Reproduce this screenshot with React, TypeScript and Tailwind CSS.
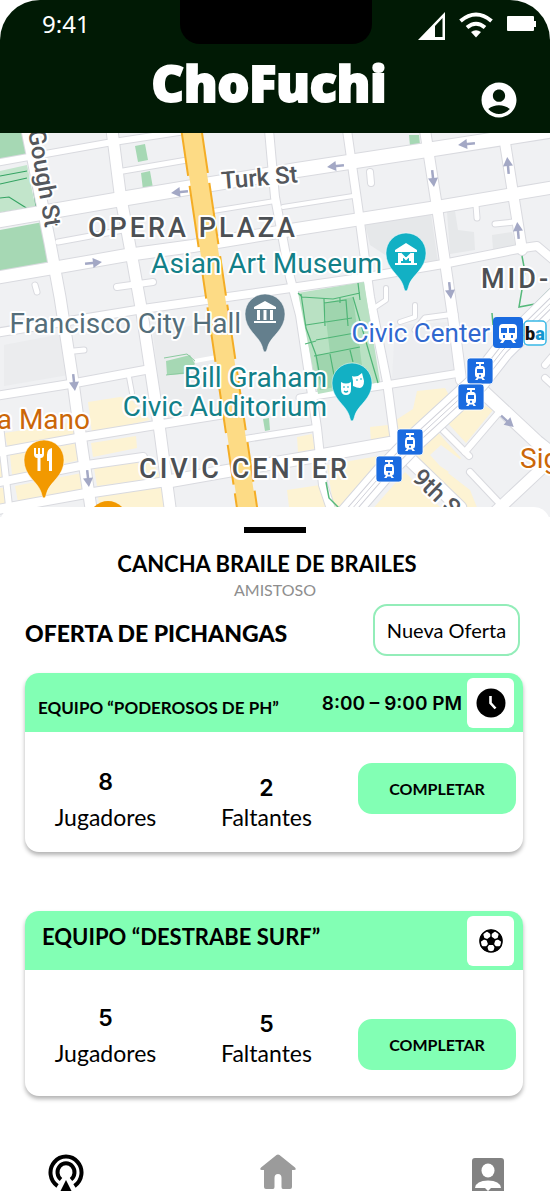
import type { ReactNode } from "react";
import { MdAccountCircle } from "react-icons/md";

/* ---------- Map ---------- */

const roads: { d: string; w: number }[] = [
  { d: "M-5 163 L107 143 L192 130", w: 6 },
  { d: "M-5 221 L127 198 L187 188 L297 170 L427 150 L555 130", w: 14 },
  { d: "M-5 278 L53 268 L127 255 L193 246 L297 229 L437 207 L555 187", w: 12 },
  { d: "M-5 333 L143 309 L270 291 L367 277 L443 264 L523 248 L537 246 L556 262", w: 8 },
  { d: "M-5 396 L70 384 L145 370", w: 8 },
  { d: "M300 398 L380 386 L460 373", w: 7 },
  { d: "M-5 453 L77 438 L150 426 L225 414", w: 8 },
  { d: "M245 439 L315 428", w: 6 },
  { d: "M-5 483 L80 466 L143 457", w: 8 },
  { d: "M165 482 L233 470 L317 456 L390 443 L405 450", w: 12 },
  { d: "M-5 510 L83 494 L163 482", w: 9 },
  { d: "M58 242 L123 230", w: 5 },
  { d: "M123 171 L187 160", w: 5 },
  { d: "M213 211 L275 201", w: 4 },
  { d: "M283 207 L353 196", w: 4 },
  { d: "M117 287 L153 282", w: 6 },
  { d: "M27 130 L50 243 L60 297 L73 382 L82 448 L92 515", w: 11 },
  { d: "M112 130 L120 193 L133 263 L142 313 L160 432 L171 515", w: 11 },
  { d: "M0 425 L10 515", w: 6 },
  { d: "M269 130 L275 197 L290 277 L300 315 L317 428 L323 485 L333 515", w: 8 },
  { d: "M347 130 L358 207 L370 297 L387 382 L395 442", w: 8 },
  { d: "M425 130 L437 207 L453 317 L461 380", w: 10 },
  { d: "M503 130 L512 187 L522 250", w: 10 },
  { d: "M395 445 L460 508", w: 13 },
  { d: "M478 387 L537 442 L560 460", w: 13 },
  { d: "M437 424 L469 456", w: 6 },
  { d: "M465 452 L500 411", w: 6 },
  { d: "M470 472 L503 507", w: 6 },
  { d: "M492 515 L555 456", w: 11 },
  { d: "M545 365 L556 352", w: 6 },
  { d: "M545 378 L556 388", w: 6 },
  { d: "M370 172 L371 183", w: 6 },
  { d: "M476 205 L477 218", w: 5 },
  { d: "M495 224 L514 222", w: 5 },
  { d: "M386 288 L386 300 L374 308", w: 4 },
  { d: "M415 305 L415 317 L400 322", w: 4 },
  { d: "M35 285 L37 292", w: 5 },
  { d: "M129 377 L132 393", w: 4 },
  { d: "M74 351 L84 350", w: 5 },
  { d: "M415 330 L425 318 L455 314", w: 5 },
];

const arrows: [number, number, number][] = [
  [180, 192, 174],
  [336, 166, 174],
  [467, 144, 174],
  [93, 263, -6],
  [433, 178, 84],
  [450, 290, 84],
  [74, 382, 84],
  [88, 478, 84],
  [508, 166, 265],
  [518, 231, 265],
  [507, 421, 42],
];

const market = "M345 517 L383 473 L417 438 L478 382 L503 350 L560 294";

function Pin({ x, y, fill, children }: { x: number; y: number; fill: string; children: ReactNode }) {
  return (
    <g transform={`translate(${x} ${y})`}>
      <path
        d="M0 39 C-1.500 39 -2 36 -3 33 C-6 23 -20 17 -20 1 A20 20 0 0 1 20 1 C20 17 6 23 3 33 C2 36 1.500 39 0 39 Z"
        fill={fill}
        stroke="#ffffff"
        strokeOpacity="0.5"
      />
      {children}
    </g>
  );
}

function Tram({ x, y }: { x: number; y: number }) {
  return (
    <g transform={`translate(${x} ${y})`}>
      <rect x="-13" y="-13" width="26" height="26" rx="3" fill="#1a6be0" stroke="#ffffff" strokeWidth="0.800" />
      <path d="M-4 -8 H4 M0 -8 V-4" stroke="#fff" strokeWidth="1.800" />
      <path
        fillRule="evenodd"
        d="M-3 -5 H3 Q5 -4 5 -1 V4 Q5 6 3 6.500 L5 9 H2.500 L1.500 7.500 H-1.500 L-2.500 9 H-5 L-3 6.500 Q-5 6 -5 4 V-1 Q-5 -4 -3 -5 Z M-3 -2 V2 H3 V-2 Z M0 3.500 A1.100 1.100 0 1 0 0.010 3.500 Z"
        fill="#fff"
      />
    </g>
  );
}

function CityMap() {
  return (
    <svg
      viewBox="0 133 550 384"
      preserveAspectRatio="xMidYMid slice"
      className="block h-[384px] w-full font-['Roboto',sans-serif]"
      role="img"
      aria-label="Mapa de Civic Center"
    >
      <rect x="-400" y="100" width="1400" height="450" fill="#f0f1f3" />

      <g fill="#e6e8ea">
        <path d="M365 224 L431 213 L438 262 L405 268 L370 245 Z" />
        <path d="M447 212 L455 211 L458 230 L474 232 L475 250 L450 254 Z" />
        <path d="M492 235 L512 232 L516 247 L493 250 Z" />
        <path d="M4 345 L62 334 L68 375 L4 386 Z M153 332 L215 322 L235 410 L163 424 Z" opacity="0.500" />
        <path d="M395 325 L450 322 L455 370 L392 380 Z" opacity="0.400" />
      </g>

      <g fill="#fdf3d3">
        <path d="M88 402 L120 397 L132 400 L150 420 L92 433 Z" />
        <path d="M91 443 L136 436 L137 448 L93 457 Z" />
        <path d="M4 433 L75 422 L78 435 L8 448 Z" />
        <path d="M10 455 L78 443 L80 460 L12 475 Z M0 460 H4 V478 H0 Z" />
        <path d="M15 486 L82 473 L86 489 L18 502 Z M0 488 H6 V506 H0 Z" />
        <path d="M94 468 L150 458 L161 478 L97 486 Z" />
        <path d="M98 496 L162 487 L165 515 H100 Z" />
        <path d="M297 437 L312 434 L315 449 L298 452 Z M370 427 L388 425 L390 438 L371 441 Z" />
        <path d="M417 391 L445 388 L450 397 L402 442 L396 420 L413 409 Z" />
        <path d="M327 465 L390 454 L398 462 L350 510 L335 515 Z M287 490 L320 485 L328 515 H290 Z" />
        <path d="M445 420 L468 397 L493 410 L466 443 Z M408 448 L434 428 L461 458 L448 473 L470 490 L480 515 H462 Z" />
        <path d="M370 512 L405 472 L448 515 Z" />
      </g>
      <path d="M430 455 L441 445 L461 460 L449 472 L440 466 Z" fill="#f0f1f3" />

      <g fill="#a6d8b4">
        <path d="M0 133 H25 L27 154 L0 159 Z" />
        <path d="M0 230 L43 222 L49 262 L0 271 Z" />
        <path d="M135 146 L145 144 L148 160 L138 162 Z M141 173 L150 171 L153 188 L143 190 Z" />
        <path d="M409 135 L419 135 L420 145 L410 146 Z" />
        <path d="M166 361 L190 355 L195 364 L184 374 L167 375 Z M263 419 L269 418 L270 430 L265 431 Z" />
      </g>
      <path d="M0 171 L27 165 L36 210 L0 217 Z" fill="#c2e5cb" />
      <path d="M0 176 L27 171 M0 184 L27 178 M0 198 L9 197 L28 209 M0 213 L36 207 L31 172" fill="none" stroke="#34a363" strokeWidth="1.200" />
      <path d="M164 358 L187 354 L195 361 M166 375 L184 373" fill="none" stroke="#8ccba0" strokeWidth="1" />

      <g fill="none" strokeLinecap="round" strokeLinejoin="round">
        {roads.map((r) => (
          <path key={r.d} d={r.d} stroke="#d9dadf" strokeWidth={r.w + 2} />
        ))}
        {roads.map((r) => (
          <path key={r.d} d={r.d} stroke="#ffffff" strokeWidth={r.w} />
        ))}
      </g>
      <path d="M195 361 L217 357" stroke="#fff" strokeWidth="4" />

      <path d="M298 293 L364 282 L380 382 L318 394 Z" fill="#b9e1c3" />
      <path d="M324 303 L353 297 L364 381 L320 390 L315 355 L330 353 Z" fill="#9fd5ae" />
      <path
        d="M298 293 L302 297 L333 299 L360 293 M301 294 L306 328 L316 355 L322 388 M324 299 L325 326 M324 303 L346 300 L348 326 M353 297 L378 383 M358 283 L360 300 M306 325 L352 318 M316 340 L355 333 M314 356 L360 347 M330 354 L334 375 M350 350 L353 362 M305 344 L316 341 M340 297 V303"
        fill="none"
        stroke="#4fb576"
        strokeWidth="1.200"
      />
      <path d="M522 256 L525 272 L519 307 L535 304 L550 289 M492 313 L493 325 M326 482 L329 498 L340 509" fill="none" stroke="#56b97b" strokeWidth="1.500" />

      <g fill="none">
        <path d={market} stroke="#d5d7de" strokeWidth="23" />
        <path d={market} stroke="#ffffff" strokeWidth="21" />
        <path d={market} stroke="#d0d1d9" strokeWidth="9" />
        <path d={market} stroke="#ffffff" strokeWidth="7" />
        <path d={market} stroke="#d0d1d9" strokeWidth="1" />
      </g>

      <path d="M190 120 L249 521" stroke="#f4ad25" strokeWidth="22" strokeDasharray="55 10 62 12 40 9" />
      <path d="M190 120 L249 521" stroke="#fddb85" strokeWidth="18" />

      {arrows.map(([x, y, angle]) => (
        <g key={`${x}-${y}`} transform={`translate(${x} ${y}) rotate(${angle})`}>
          <path d="M-8 0 H2" stroke="#a3a8c5" strokeWidth="2.500" />
          <path d="M0 -5 L9 0 L0 5 Z" fill="#a3a8c5" />
        </g>
      ))}

      <g stroke="#ffffff" strokeWidth="4" strokeLinejoin="round" paintOrder="stroke">
        <g fontSize="24" fontWeight="500" fill="#54575c">
          <text transform="translate(222 189) rotate(-5)">Turk St</text>
          <text transform="translate(28 131) rotate(80)">Gough St</text>
          <text transform="translate(411 479) rotate(44)">9th St</text>
        </g>
        <g fontSize="27" fontWeight="500" fill="#4c5054" className="tracking-[3px]">
          <text x="88" y="237">OPERA PLAZA</text>
          <text x="139" y="478">CIVIC CENTER</text>
          <text x="481" y="288">MID-</text>
        </g>
        <g fontSize="28" textAnchor="end">
          <g fill="#128088">
            <text x="382" y="273">Asian Art Museum</text>
            <text x="327" y="387">Bill Graham</text>
            <text x="327" y="416">Civic Auditorium</text>
          </g>
          <text x="241" y="333" fill="#546e7a">Francisco City Hall</text>
          <text x="90" y="429" fill="#cb6708">a Mano</text>
        </g>
        <text x="490" y="342" textAnchor="end" fontSize="26" fill="#3068cf">Civic Center</text>
        <text x="520" y="468" fontSize="28" fill="#cb6708">Sig</text>
      </g>

      <Pin x={406} y={252} fill="#12b0c4">
        <path d="M0 -9 L11 -2 V0 H-11 V-2 Z M-8 1 H-5 V11 H-8 Z M5 1 H8 V11 H5 Z M-11 11 H11 V13 H-11 Z" fill="#fff" />
        <path d="M-4 9 V3 L0 7 L4 3 V9" fill="none" stroke="#fff" strokeWidth="2" />
      </Pin>
      <Pin x={265} y={313} fill="#647f8d">
        <path d="M0 -12 L11 -6 V-4 H-11 V-6 Z M-8 -3 H-5 V7 H-8 Z M-1.500 -3 H1.500 V7 H-1.500 Z M5 -3 H8 V7 H5 Z M-11 8 H11 V10 H-11 Z" fill="#fff" />
      </Pin>
      <Pin x={352} y={382} fill="#12b0c4">
        <path d="M-11 0 Q-6 3 -1 0 V7 Q-1 13 -6 13 Q-11 13 -11 7 Z M0 -6 Q5 -4 10 -9 L12 -1 Q12 5 8 6 Q5 6 1 4 V-1 Z" fill="#fff" />
        <path d="M-9 5 H-7 M-5 5 H-3 M-8 9 Q-6 11 -4 9 M4 -2 H6 M8 -3 H10" fill="none" stroke="#12b0c4" strokeWidth="1.200" />
      </Pin>
      <Pin x={44} y={459} fill="#f29900">
        <path d="M-10 -11 V-5 Q-10 -1 -6.500 -1 V12 H-3.500 V-1 Q0 -1 0 -5 V-11 H-2 V-5 H-4 V-11 H-6 V-5 H-8 V-11 Z M8 -11 Q3 -10 3 -4 V2 H5 V12 H8 Z" fill="#fff" />
      </Pin>
      <circle cx="108" cy="520" r="19" fill="#f29900" />

      <g transform="translate(508 333)">
        <rect x="-15" y="-16" width="30" height="31" rx="4" fill="#1a6be0" />
        <path
          fillRule="evenodd"
          d="M-5 -9 H5 Q9 -9 9 -5 V4 Q9 7 6 7 L8 10 H5 L3 7 H-3 L-5 10 H-8 L-6 7 Q-9 7 -9 4 V-5 Q-9 -9 -5 -9 Z M-7 -5 V0 H-1 V-5 Z M1 -5 V0 H7 V-5 Z M-5 2 V5 H-3 V2 Z M3 2 V5 H5 V2 Z"
          fill="#fff"
        />
      </g>
      <rect x="524" y="321" width="22" height="24" rx="4" fill="#fff" stroke="#39b8e6" strokeWidth="1.500" />
      <text x="525" y="340" fontSize="18" fontWeight="900" fill="#111">
        b<tspan fill="#1596cf">a</tspan>
      </text>
      <Tram x={480} y={371} />
      <Tram x={471} y={397} />
      <Tram x={410} y={442} />
      <Tram x={389} y={469} />
    </svg>
  );
}

/* ---------- Header ---------- */

function Header() {
  return (
    <header className="h-[133px] rounded-t-[40px] bg-[#011a05] text-white">
      <div className="grid h-11 grid-cols-[180fr_192fr_178fr]">
        <span className="pt-2 pl-[42px] font-['Noto_Sans',sans-serif] text-[24px] leading-8">9:41</span>
        <span className="rounded-b-[20px] bg-black" />
        <div className="flex items-start justify-end gap-[14px] pt-3 pr-[14px]">
          <svg width="27" height="28" viewBox="0 0 27 28" aria-hidden="true">
            <path fillRule="evenodd" d="M27 0 V28 H0 Z M24.500 6 L17 14 V25 H24.500 Z" fill="#fff" />
          </svg>
          <svg width="34" height="26" viewBox="0 0 34 26" fill="none" stroke="#fff" strokeWidth="4" aria-hidden="true">
            <path d="M1.500 9 Q17 -4 32.500 9" />
            <path d="M8 15.500 Q17 8 26 15.500" />
            <path d="M12 20 Q17 16.500 22 20 L17 25.500 Z" fill="#fff" stroke="none" />
          </svg>
          <svg width="29" height="20" viewBox="0 0 29 20" aria-hidden="true">
            <path d="M1 4 H26 Q27 4 27 5 V9 H29 V15 H27 V18 Q27 19 26 19 H1 Q0 19 0 18 V5 Q0 4 1 4 Z" fill="#fff" />
          </svg>
        </div>
      </div>
      <div className="grid grid-cols-[1fr_auto_1fr] px-[30px]">
        <h1 className="col-start-2 pt-[7px] pr-3 font-['Open_Sans',sans-serif] text-[50px] leading-[64px] font-extrabold [-webkit-text-stroke:2px_white] [stroke-linejoin:round]">
          ChoFuchi
        </h1>
        <button type="button" aria-label="Cuenta" className="mt-[35px] h-[42px] justify-self-end">
          <MdAccountCircle size={42} />
        </button>
      </div>
    </header>
  );
}

/* ---------- Offers ---------- */

function ClockIcon() {
  return (
    <svg width="30" height="30" viewBox="0 0 30 30" aria-hidden="true">
      <circle cx="15" cy="15" r="14.500" fill="#000" />
      <path d="M14.500 8 V15 L19.500 20.500" fill="none" stroke="#fff" strokeWidth="2.600" />
    </svg>
  );
}

const fifths = [0, 72, 144, 216, 288];

function BallIcon() {
  return (
    <svg width="24" height="24" viewBox="-12 -12 24 24" aria-hidden="true">
      <circle r="11" fill="#fff" stroke="#000" strokeWidth="1.600" />
      <path d="M0 -4.800 L4.600 -1.500 L2.800 3.900 H-2.800 L-4.600 -1.500 Z" fill="#000" />
      {fifths.map((angle) => (
        <g key={angle} transform={`rotate(${angle})`}>
          <path d="M0 -4 V-8" stroke="#000" strokeWidth="1.400" />
          <path d="M-5 -10.200 L0 -6.600 L5 -10.200 L0 -11.500 Z" fill="#000" />
        </g>
      ))}
    </svg>
  );
}

function Stat({ value, label, className = "" }: { value: number; label: string; className?: string }) {
  return (
    <div className={`flex flex-col-reverse text-center ${className}`}>
      <dt className="text-[23px] leading-7">{label}</dt>
      <dd className="font-['Inter',sans-serif] text-[23px] leading-[30px] font-semibold">{value}</dd>
    </div>
  );
}

type OfferProps = {
  title: string;
  titleClass: string;
  time?: string;
  icon: ReactNode;
  players: number;
  missing: number;
  bodyClass: string;
  statsClass: string;
  buttonClass: string;
};

function OfferCard({ title, titleClass, time, icon, players, missing, bodyClass, statsClass, buttonClass }: OfferProps) {
  return (
    <article className="overflow-hidden rounded-[14px] bg-white shadow-[0_3px_4px_rgba(0,0,0,0.3)]">
      <div className="flex h-[59px] items-center bg-[#82ffb4]">
        <h3 className={`flex-1 font-bold whitespace-nowrap ${titleClass}`}>{title}</h3>
        {time && (
          <span className="pt-1 pr-[5px] font-['Inter',sans-serif] text-[19px] font-semibold whitespace-nowrap">{time}</span>
        )}
        <span className="mr-[9px] flex h-[50px] w-[47px] items-center justify-center rounded-md bg-white">{icon}</span>
      </div>
      <div className={`grid grid-cols-[162fr_162fr_174fr] ${bodyClass}`}>
        <dl className={`col-span-2 grid grid-cols-2 items-start pr-[2px] ${statsClass}`}>
          <Stat value={players} label="Jugadores" className="gap-[6px]" />
          <Stat value={missing} label="Faltantes" className="pt-[6px]" />
        </dl>
        <button
          type="button"
          className={`mr-[7px] ml-[9px] h-[51px] rounded-[14px] bg-[#82ffb4] text-[16px] font-bold ${buttonClass}`}
        >
          COMPLETAR
        </button>
      </div>
    </article>
  );
}

/* ---------- Bottom navigation ---------- */

function BottomNav() {
  return (
    <nav className="mt-[58px] flex h-[37px] items-start justify-between overflow-hidden pr-[46px] pl-[48px]">
      <a href="#cerca" aria-label="Cerca">
        <svg width="36" height="40" viewBox="0 0 36 40" fill="none" stroke="#000" strokeWidth="4" aria-hidden="true">
          <path d="M9.500 32 A15.500 16 0 1 1 26.500 32" />
          <path d="M13 25.500 A8.500 9 0 1 1 23 25.500" />
          <path d="M18 26 L25 40 H11 Z" fill="#000" stroke="none" />
        </svg>
      </a>
      <a href="#inicio" aria-label="Inicio">
        <svg width="36" height="36" viewBox="0 0 36 36" aria-hidden="true">
          <path
            d="M16.500 1 Q18 0 19.500 1 L35 13.500 Q37 16 34 16 H32 V33 Q32 35 30 35 H23 Q21.500 35 21.500 33 V24 Q21.500 20 18 20 Q14.500 20 14.500 24 V33 Q14.500 35 13 35 H6 Q4 35 4 33 V16 H2 Q-1 16 1 13.500 Z"
            fill="#9b9b9b"
          />
        </svg>
      </a>
      <a href="#perfil" aria-label="Perfil" className="pt-1">
        <svg width="32" height="36" viewBox="0 0 32 36" aria-hidden="true">
          <rect width="32" height="36" rx="3" fill="#828282" />
          <ellipse cx="16" cy="12.500" rx="6.500" ry="7" fill="#fff" />
          <path d="M3 30 Q4 22.500 16 22.500 Q28 22.500 29 30 H19 L16 33 L13 30 Z" fill="#fff" />
        </svg>
      </a>
    </nav>
  );
}

export default function App() {
  return (
    <div className="w-full overflow-hidden bg-white font-['Lato',sans-serif] text-black">
      <Header />
      <CityMap />
      <main className="relative -mt-[10px] rounded-t-[16px] bg-white pt-5">
        <div className="mx-auto h-[6px] w-[62px] bg-black" />
        <div className="pt-[17px] pr-4 text-center">
          <h2 className="text-[22px] leading-7 font-bold">CANCHA BRAILE DE BRAILES</h2>
          <p className="pl-4 text-[16px] leading-6 text-[#8e8e8e]">AMISTOSO</p>
        </div>
        <section className="pr-[27px] pl-[25px]">
          <div className="flex h-[54px] items-start justify-between pr-[3px]">
            <h2 className="pt-[17px] text-[23px] leading-7 font-black">OFERTA DE PICHANGAS</h2>
            <button
              type="button"
              className="mt-[2px] h-[52px] w-[147px] rounded-[14px] border-2 border-[#93edb9] text-[20px] whitespace-nowrap"
            >
              Nueva Oferta
            </button>
          </div>
          <div className="flex flex-col gap-[59px] pt-[17px]">
            <OfferCard
              title="EQUIPO “PODEROSOS DE PH”"
              titleClass="pt-[10px] pl-[13px] text-[17px]"
              time="8:00 – 9:00 PM"
              icon={<ClockIcon />}
              players={8}
              missing={2}
              bodyClass="h-[120px]"
              statsClass="pt-[35px]"
              buttonClass="mt-[31px]"
            />
            <OfferCard
              title="EQUIPO “DESTRABE SURF”"
              titleClass="pb-2 pl-[17px] text-[22px]"
              icon={<BallIcon />}
              players={5}
              missing={5}
              bodyClass="h-[126px]"
              statsClass="pt-[33px]"
              buttonClass="mt-[49px]"
            />
          </div>
        </section>
      </main>
      <BottomNav />
    </div>
  );
}
